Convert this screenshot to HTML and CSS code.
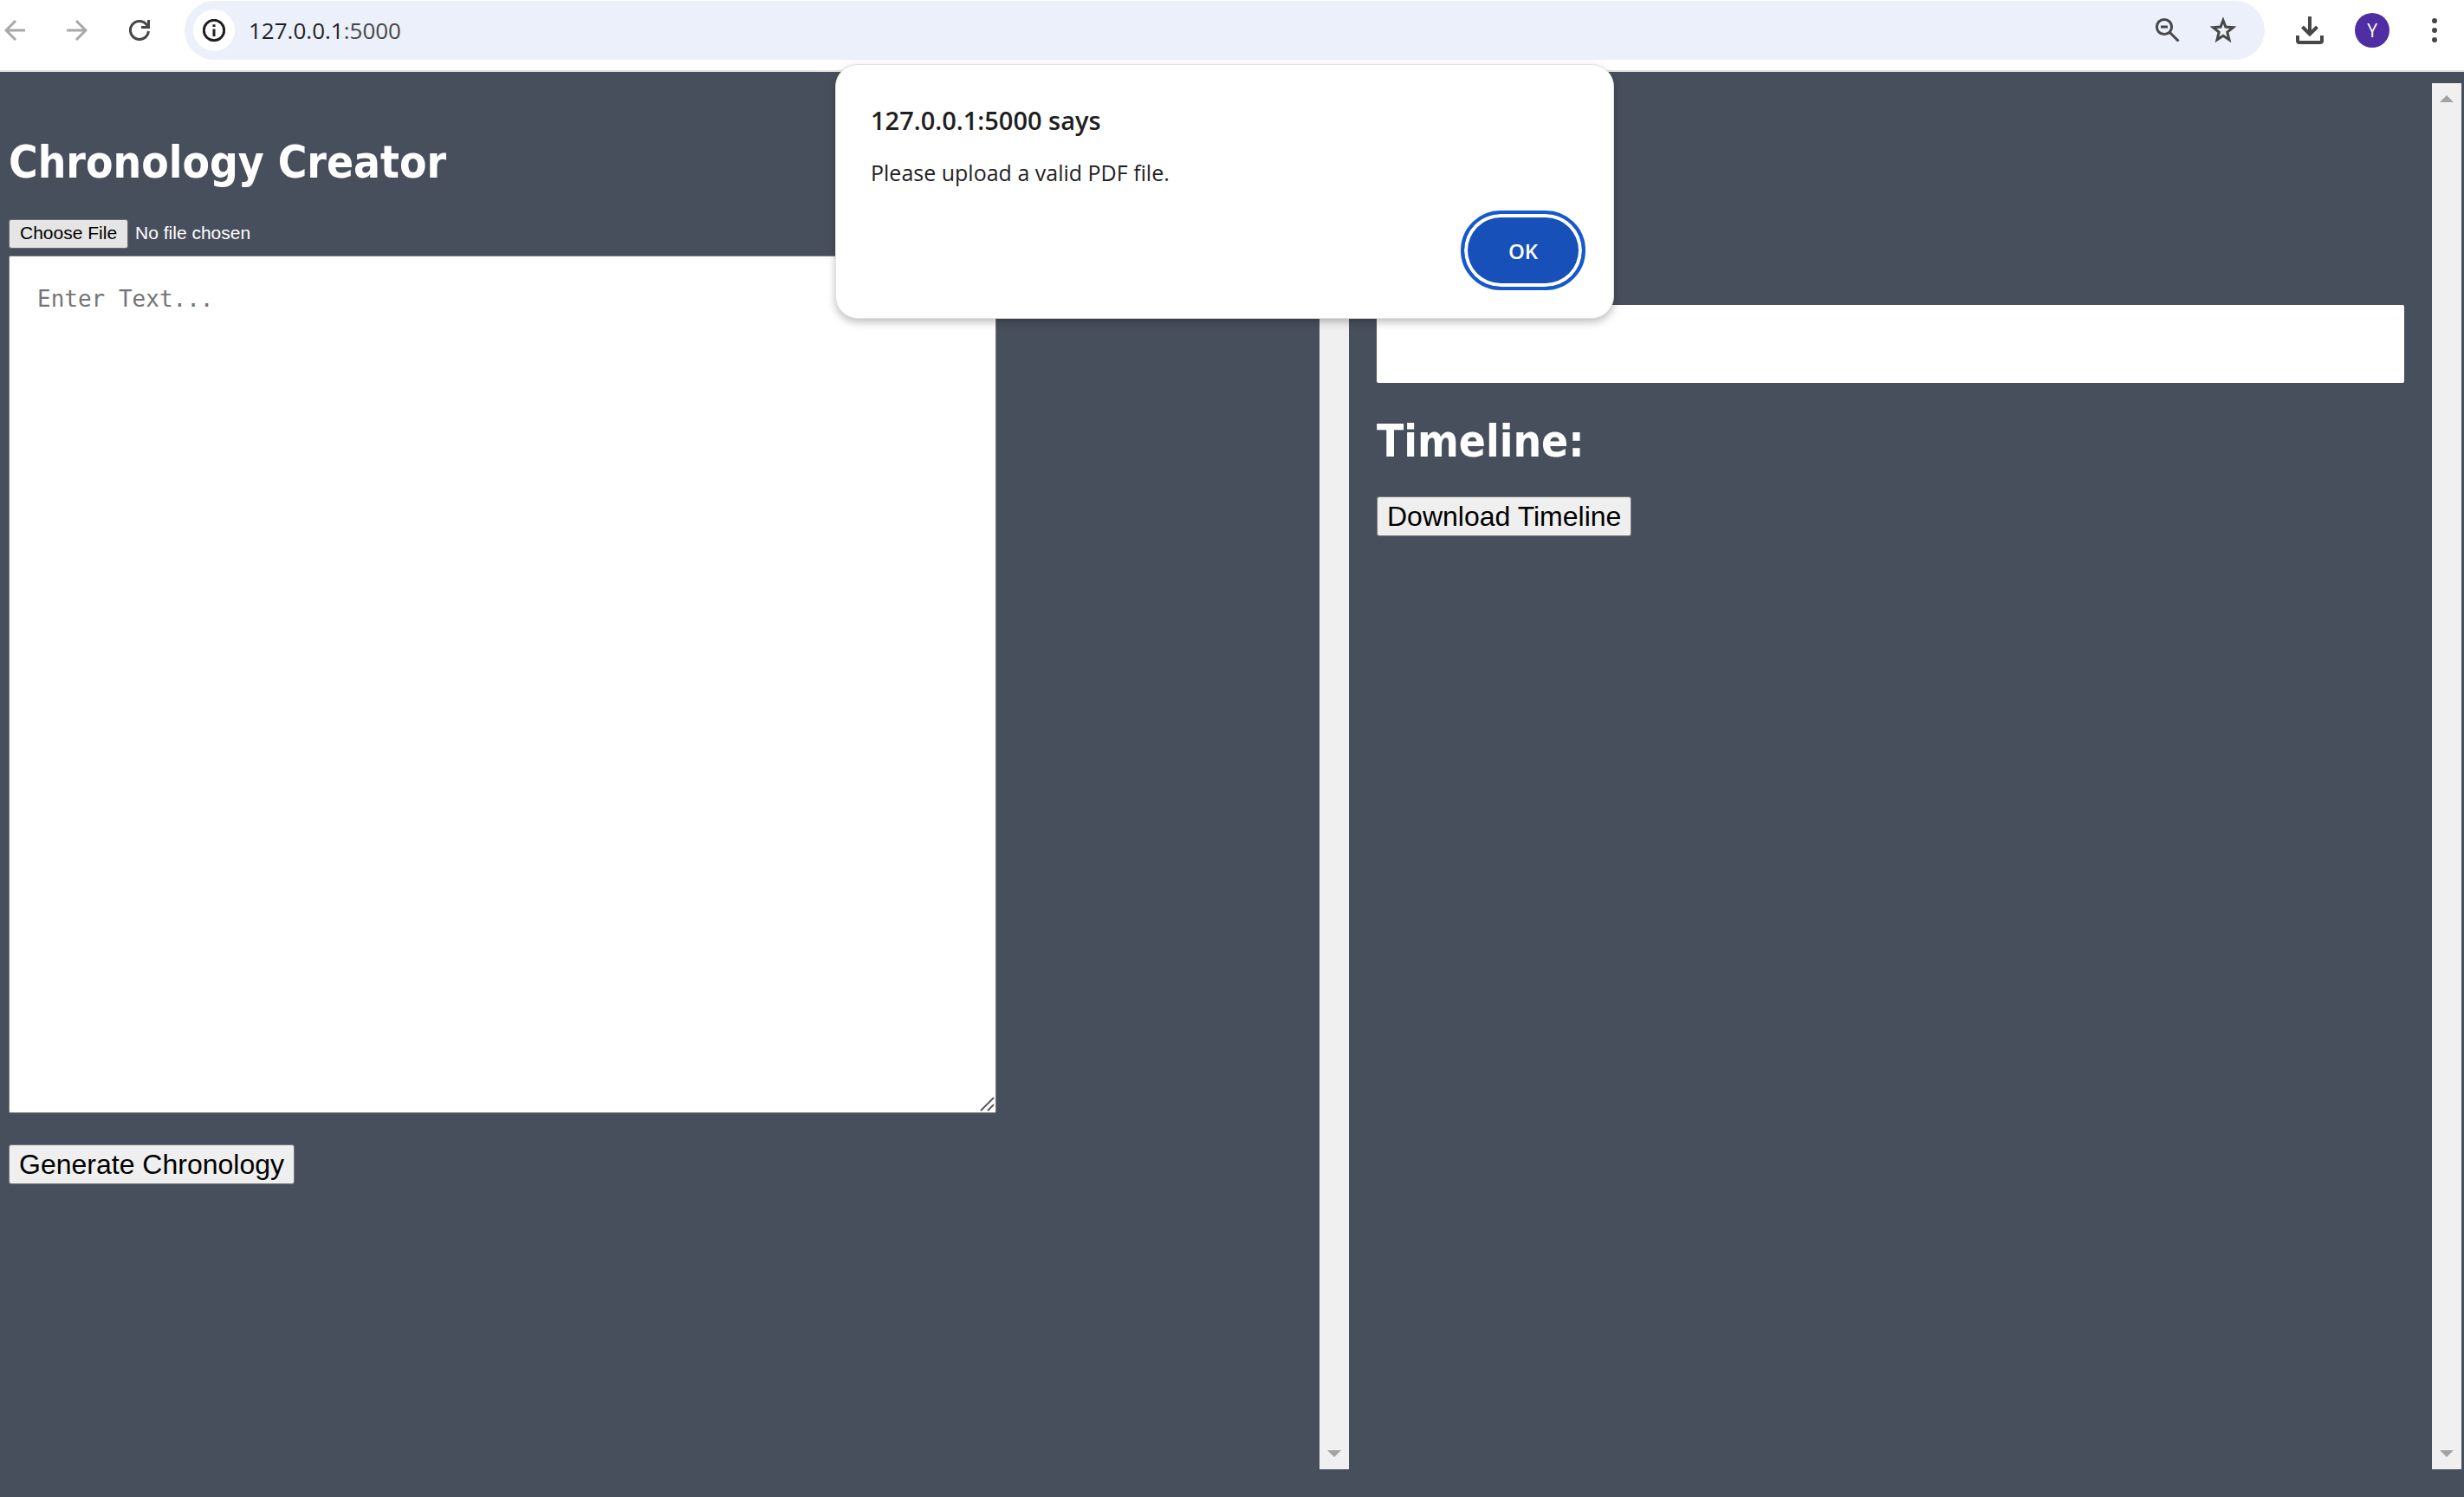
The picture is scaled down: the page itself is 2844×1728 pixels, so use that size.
FILE: index.html
```html
<!DOCTYPE html>
<html lang="en">
<head>
<meta charset="utf-8">
<title>Chronology Creator</title>
<link rel="stylesheet" href="styles.css">
</head>
<body>
<header class="toolbar">
  <nav class="nav" aria-label="Browser">
    <button class="icon-button dim" aria-label="Back"><svg width="24" height="24" viewBox="0 0 24 24"><path d="M24 12H2M13 1L2 12L13 23"/></svg></button>
    <button class="icon-button dim" aria-label="Forward"><svg width="24" height="24" viewBox="0 0 24 24"><path d="M0 12H22M11 1L22 12L11 23"/></svg></button>
    <button class="icon-button" aria-label="Reload"><svg width="24" height="24" viewBox="0 0 24 24"><path d="M22.4 13A10.5 10.5 0 1 1 20 5.200L22 7.500M22.500 0V8.500H14"/></svg></button>
  </nav>
  <div class="omnibox">
    <button class="site-info" aria-label="Site information"><svg width="26" height="26" viewBox="0 0 26 26"><circle cx="13" cy="13" r="11.700"/><path d="M13 11.500V20M13 6.200V9"/></svg></button>
    <div class="url"><span class="host">127.0.0.1</span>:5000</div>
    <button class="icon-button" aria-label="Zoom"><svg width="32" height="32" viewBox="0 0 32 32"><circle cx="12" cy="12" r="8.600"/><path d="M8 12H16M18 18L28.500 28.500"/></svg></button>
    <button class="icon-button" aria-label="Bookmark"><svg width="32" height="32" viewBox="0 0 32 32"><path d="M16 4.500L18.900 12L27.500 12.700L20.800 18L23 26.800L16 22.200L9 26.800L11.200 18L4.500 12.700L13.100 12Z"/></svg></button>
  </div>
  <button class="icon-button" aria-label="Downloads"><svg class="heavy" width="32" height="32" viewBox="0 0 32 32"><path d="M16 0V20M7.500 12L16 20.500L24.500 12M2 22V28Q2 30 4 30H28Q30 30 30 28V22"/></svg></button>
  <button class="avatar" aria-label="Profile">Y</button>
  <button class="icon-button" aria-label="Menu"><svg class="dots" width="32" height="32" viewBox="0 0 32 32"><circle cx="16" cy="5" r="3"/><circle cx="16" cy="16" r="3"/><circle cx="16" cy="27" r="3"/></svg></button>
</header>

<main class="page">
  <section class="panel">
    <form class="content">
      <h1>Chronology Creator</h1>
      <input class="file" type="file" aria-label="PDF file">
      <div class="editor">
        <textarea placeholder="Enter Text..." aria-label="Text"></textarea>
        <svg class="grip" width="18" height="18" viewBox="0 0 18 18" aria-hidden="true"><path d="M1 16L16 1M9 16L16 9"/></svg>
      </div>
      <button class="action" type="button">Generate Chronology</button>
    </form>
    <div class="scrollbar" aria-hidden="true"><svg width="16" height="8" viewBox="0 0 16 8"><path d="M0 8L8 0L16 8Z"/></svg><svg width="16" height="8" viewBox="0 0 16 8"><path d="M0 0H16L8 8Z"/></svg></div>
  </section>
  <section class="panel">
    <div class="content results">
      <output class="output" aria-label="Chronology"></output>
      <h1>Timeline:</h1>
      <button class="action" type="button">Download Timeline</button>
    </div>
    <div class="scrollbar" aria-hidden="true"><svg width="16" height="8" viewBox="0 0 16 8"><path d="M0 8L8 0L16 8Z"/></svg><svg width="16" height="8" viewBox="0 0 16 8"><path d="M0 0H16L8 8Z"/></svg></div>
  </section>
</main>

<div class="dialog" role="alertdialog" aria-labelledby="alert-title" aria-describedby="alert-text">
  <h2 id="alert-title">127.0.0.1:5000 says</h2>
  <p id="alert-text">Please upload a valid PDF file.</p>
  <button class="ok">OK</button>
</div>
</body>
</html>
```
FILE: styles.css
```css
* {
  box-sizing: border-box;
}

body {
  margin: 0;
  min-height: 100vh;
  display: flex;
  flex-direction: column;
  position: relative;
  background: #484f5c;
  color: #fff;
  font-family: "Open Sans", "Noto Sans", sans-serif;
}

button {
  font-family: inherit;
}

.toolbar {
  display: flex;
  align-items: center;
  gap: 36px;
  padding: 1px 18px 12px 5px;
  background: #fff;
  border-bottom: 2px solid #dfe1dc;
}

.nav {
  display: flex;
  gap: 48px;
  margin-right: 4px;
}

.icon-button {
  display: flex;
  padding: 0;
  border: 0;
  background: none;
  color: #474747;
}

.dim {
  color: #a8a8a8;
}

.toolbar svg {
  fill: none;
  stroke: currentColor;
  stroke-width: 3;
}

.toolbar .heavy {
  stroke-width: 4;
}

.toolbar .dots {
  fill: currentColor;
  stroke: none;
}

.omnibox {
  flex: 1;
  display: flex;
  align-items: center;
  gap: 32px;
  height: 68px;
  padding: 0 32px 0 10px;
  border-radius: 34px;
  background: #ebf0fa;
}

.site-info {
  display: flex;
  align-items: center;
  justify-content: center;
  width: 48px;
  height: 48px;
  margin-right: -16px;
  padding: 0;
  border: 0;
  border-radius: 50%;
  background: #fff;
  color: #1f1f1f;
}

.url {
  flex: 1;
  color: #474747;
  font-size: 26px;
  line-height: 36px;
}

.host {
  color: #1f1f1f;
}

.avatar {
  width: 40px;
  height: 40px;
  padding: 0;
  border: 0;
  border-radius: 50%;
  background: #4f2da3;
  color: #fff;
  font-family: "Open Sans", sans-serif;
  font-size: 21px;
  line-height: 40px;
}

.page {
  flex: 1;
  display: grid;
  grid-template-columns: 1547fr 1284fr;
  padding: 13px 3px 32px 10px;
}

.panel {
  display: flex;
  min-width: 0;
}

.content {
  flex: 1;
  min-width: 0;
  display: flex;
  flex-direction: column;
  align-items: flex-start;
  padding-top: 58px;
}

.results {
  padding: 256px 32px 0;
}

h1 {
  margin: 0;
  font-family: "DejaVu Sans Condensed", "Open Sans", sans-serif;
  font-size: 51px;
  line-height: 68px;
  font-weight: 700;
}

.file {
  margin: 31px 0 8px;
  height: 34px;
  color: #fff;
  font-family: "Liberation Sans", Arial, sans-serif;
  font-size: 21px;
}

.file::file-selector-button {
  height: 34px;
  margin: 0 8px 0 0;
  padding: 1px 12px 3px;
  border: 1px solid #6b6b6b;
  border-radius: 3px;
  background: #e5e5e5;
  color: #000;
  font: inherit;
}

.editor {
  position: relative;
  width: 100%;
  max-width: 1140px;
}

textarea {
  display: block;
  width: 100%;
  height: 990px;
  padding: 32px;
  border: 1px solid #767676;
  border-radius: 2px;
  background: #fff;
  resize: none;
  font-family: "DejaVu Sans Mono", monospace;
  font-size: 26px;
  line-height: 34px;
}

textarea::placeholder {
  color: #757575;
}

.grip {
  position: absolute;
  right: 1px;
  bottom: 1px;
  fill: none;
  stroke: #5a5a5a;
  stroke-width: 2;
}

.action {
  height: 46px;
  margin-top: 36px;
  padding: 0 11px;
  border: 1px solid #767676;
  border-radius: 3px;
  background: #efefef;
  color: #000;
  font-family: "Liberation Sans", Arial, sans-serif;
  font-size: 32px;
  line-height: 40px;
}

.results .action {
  margin-top: 29px;
}

.output {
  display: block;
  width: 100%;
  height: 90px;
  margin-bottom: 34px;
  border-radius: 2px;
  background: #fff;
}

.scrollbar {
  display: flex;
  flex-direction: column;
  justify-content: space-between;
  align-items: center;
  width: 34px;
  padding: 14px 0;
  background: #f0f0f0;
}

.scrollbar svg {
  fill: #a3a3a3;
}

.dialog {
  position: absolute;
  top: 74px;
  left: calc(50% - 458px);
  width: 899px;
  padding: 42px 32px 32px 40px;
  display: flex;
  flex-direction: column;
  border: 1px solid #dfe1dc;
  border-radius: 26px;
  background: #fff;
  color: #1f1f1f;
  box-shadow: 0 4px 10px rgba(0, 0, 0, 0.25);
}

.dialog h2 {
  margin: 0;
  font-size: 29px;
  line-height: 44px;
  font-weight: 600;
}

.dialog p {
  margin: 22px 0 28px;
  font-size: 25px;
  line-height: 32px;
}

.ok {
  align-self: flex-end;
  width: 144px;
  height: 92px;
  padding: 0;
  border: 4px solid #1558d0;
  border-radius: 46px;
  background: #1650b8;
  box-shadow: inset 0 0 0 4px #fff;
  color: #fff;
  font-size: 24px;
  font-weight: 600;
}
```
